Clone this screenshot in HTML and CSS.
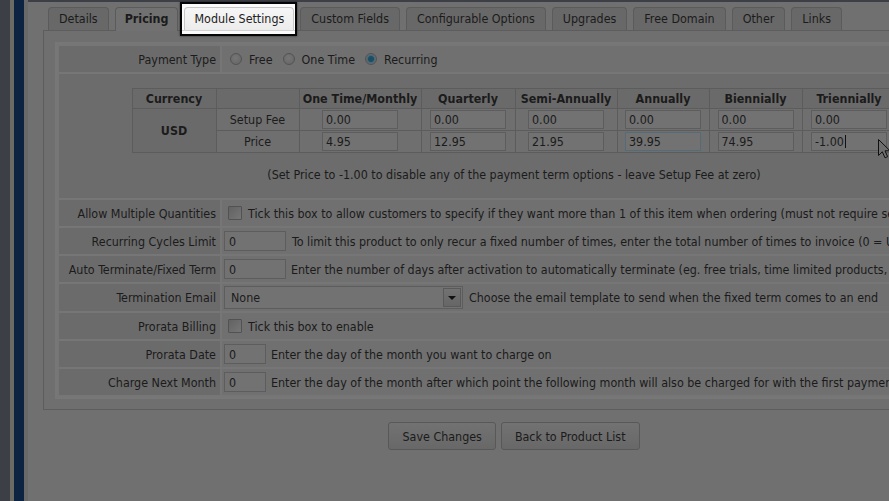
FILE: index.html
```html
<!DOCTYPE html>
<html lang="en">
<head>
<meta charset="utf-8">
<title>Product Pricing</title>
<link rel="stylesheet" href="styles.css">
</head>
<body>
<div class="page">
  <div class="sidebar"></div>
  <div class="main">
    <ul class="tabs">
      <li><a>Details</a></li>
      <li class="active"><a>Pricing</a></li>
      <li class="spot"><a>Module Settings</a></li>
      <li><a>Custom Fields</a></li>
      <li><a>Configurable Options</a></li>
      <li><a>Upgrades</a></li>
      <li><a>Free Domain</a></li>
      <li><a>Other</a></li>
      <li><a>Links</a></li>
    </ul>
    <div class="tabbox">
      <table class="form">
        <colgroup><col class="labelcol"><col></colgroup>
        <tr>
          <td class="label">Payment Type</td>
          <td class="field">
            <div class="opts">
              <label class="opt"><input type="radio" name="pt"><span>Free</span></label>
              <label class="opt"><input type="radio" name="pt"><span>One Time</span></label>
              <label class="opt"><input type="radio" name="pt" checked><span>Recurring</span></label>
            </div>
          </td>
        </tr>
        <tr>
          <td class="pricing" colspan="2">
            <table class="prices">
              <colgroup>
                <col class="c1"><col class="c2"><col class="c3"><col class="c4"><col class="c5"><col class="c6"><col class="c7"><col class="c8">
              </colgroup>
              <tr class="head">
                <th>Currency</th><th></th><th>One Time/Monthly</th><th>Quarterly</th><th>Semi-Annually</th><th>Annually</th><th>Biennially</th><th>Triennially</th>
              </tr>
              <tr>
                <th class="cur" rowspan="2">USD</th>
                <td>Setup Fee</td>
                <td><input class="price" value="0.00"></td>
                <td><input class="price" value="0.00"></td>
                <td><input class="price" value="0.00"></td>
                <td><input class="price" value="0.00"></td>
                <td><input class="price" value="0.00"></td>
                <td><input class="price" value="0.00"></td>
              </tr>
              <tr>
                <td>Price</td>
                <td><input class="price" value="4.95"></td>
                <td><input class="price" value="12.95"></td>
                <td><input class="price" value="21.95"></td>
                <td><input class="price hover" value="39.95"></td>
                <td><input class="price" value="74.95"></td>
                <td><span class="price editing">-1.00<span class="caret"></span></span></td>
              </tr>
            </table>
            <p class="note">(Set Price to -1.00 to disable any of the payment term options - leave Setup Fee at zero)</p>
          </td>
        </tr>
        <tr>
          <td class="label">Allow Multiple Quantities</td>
          <td class="field"><div class="line"><input type="checkbox" class="check"><span class="desc">Tick this box to allow customers to specify if they want more than 1 of this item when ordering (must not require separate config)</span></div></td>
        </tr>
        <tr>
          <td class="label">Recurring Cycles Limit</td>
          <td class="field"><div class="line"><input class="text w62" value="0"><span class="desc">To limit this product to only recur a fixed number of times, enter the total number of times to invoice (0 = Unlimited)</span></div></td>
        </tr>
        <tr>
          <td class="label">Auto Terminate/Fixed Term</td>
          <td class="field"><div class="line"><input class="text w62" value="0"><span class="desc d5">Enter the number of days after activation to automatically terminate (eg. free trials, time limited products, etc...)</span></div></td>
        </tr>
        <tr class="tall">
          <td class="label">Termination Email</td>
          <td class="field"><div class="line"><div class="select"><select><option>None</option></select><span class="arrow"></span></div><span class="desc">Choose the email template to send when the fixed term comes to an end</span></div></td>
        </tr>
        <tr>
          <td class="label">Prorata Billing</td>
          <td class="field"><div class="line"><input type="checkbox" class="check"><span class="desc">Tick this box to enable</span></div></td>
        </tr>
        <tr>
          <td class="label">Prorata Date</td>
          <td class="field"><div class="line"><input class="text w42" value="0"><span class="desc d5">Enter the day of the month you want to charge on</span></div></td>
        </tr>
        <tr>
          <td class="label">Charge Next Month</td>
          <td class="field"><div class="line"><input class="text w42" value="0"><span class="desc d5">Enter the day of the month after which point the following month will also be charged for with the first payment</span></div></td>
        </tr>
      </table>
    </div>
    <div class="buttons">
      <button type="button" class="btn">Save Changes</button>
      <button type="button" class="btn">Back to Product List</button>
    </div>
  </div>
</div>
<svg class="cursor" width="13" height="20" viewBox="0 0 13 20" aria-hidden="true">
  <path d="M0.5 0.5 L0.5 16.5 L4.3 12.8 L7 18.8 L9.6 17.7 L7 11.8 L12 11.8 Z" fill="#6e6e6e" stroke="#101010" stroke-width="1"/>
</svg>
</body>
</html>
```

FILE: styles.css
```css
html, body {
  margin: 0;
  padding: 0;
  overflow: hidden;
  background: #707070;
}
body {
  font-family: "DejaVu Sans Condensed", "Liberation Sans", Arial, sans-serif;
  font-size: 12.4px;
  color: #1b1b1b;
}
.page {
  display: flex;
  width: 1020px;
  min-height: 501px;
}
.sidebar {
  flex: none;
  width: 28px;
  background: linear-gradient(to right, #3c3f45 0 10px, #6b6a63 10px 14px, #0c2442 14px 24px, #696969 24px 28px);
}
.main {
  flex: 1;
  border-top: 2px solid #3c3f45;
  padding-left: 15px;
}

/* tabs */
.tabs {
  list-style: none;
  margin: 0;
  padding: 5px 0 0 5px;
  display: flex;
  align-items: flex-end;
  gap: 6px;
}
.tabs li {
  display: block;
}
.tabs a {
  display: block;
  line-height: 22px;
  padding: 0 10px;
  border: 1px solid #5b5b5b;
  border-bottom: 0;
  border-radius: 4px 4px 0 0;
  background: #686868;
  color: #1b1b1b;
  white-space: nowrap;
}
.tabs li.active {
  position: relative;
  z-index: 1;
  margin-bottom: -1px;
}
.tabs li.active a {
  background: #717171;
  font-weight: bold;
  padding: 0 9px 1px;
}
.tabs li.spot {
  position: relative;
}
.tabs li.spot::before {
  content: "";
  position: absolute;
  top: -5px;
  left: -4px;
  right: -3px;
  bottom: -6px;
  border: 2px solid #050505;
  background: linear-gradient(to bottom, #fbfbfb 0 26px, #d2d2d2 26px 27px, #fbfbfb 27px);
  box-shadow: 0 0 2px rgba(0, 0, 0, 0.6);
}
.tabs li.spot a {
  position: relative;
  padding: 0 9px;
  background: linear-gradient(to bottom, #f6f6f6, #ececec);
  border-color: #c8c8c8;
  color: #222;
}

/* tab box */
.tabbox {
  width: 918px;
  border: 1px solid #5d5d5d;
  background: #6f6f6f;
  padding: 11px 11px 10px;
}
.form {
  width: 100%;
  table-layout: fixed;
  border: 2px solid #777;
  border-spacing: 2px;
  background: #767676;
}
.form .labelcol {
  width: 161px;
}
.form td {
  padding: 0;
  height: 26px;
  vertical-align: middle;
}
.form tr.tall td {
  height: 27px;
}
.form td.label {
  padding-right: 4px;
  text-align: right;
  background: #6b6b6b;
  white-space: nowrap;
}
.form td.field {
  background: #707070;
  padding-left: 2px;
  white-space: nowrap;
}
.form td.pricing {
  background: #6c6c6c;
  vertical-align: top;
  padding: 14px 0 16px;
  height: auto;
}

/* payment type */
.opts {
  display: flex;
  align-items: center;
}
.opt {
  display: flex;
  align-items: center;
  margin-left: 6px;
  margin-right: 4px;
}
.opt span {
  margin-left: 7px;
}
input[type="radio"] {
  appearance: none;
  -webkit-appearance: none;
  flex: none;
  margin: 0;
  width: 12px;
  height: 12px;
  border: 1px solid #535353;
  border-radius: 50%;
  background: radial-gradient(circle at 45% 40%, #767676, #646464);
}
input[type="radio"]:checked {
  background: radial-gradient(circle, #1d4d64 0 2.5px, #3b6b7f 3.5px, #686868 4.5px);
}

/* pricing table */
.prices {
  border-collapse: collapse;
  table-layout: fixed;
  width: 764px;
  margin: 0 auto;
}
.prices .c1 { width: 84px; }
.prices .c2 { width: 83px; }
.prices .c3 { width: 122px; }
.prices .c4 { width: 94px; }
.prices .c5 { width: 102px; }
.prices .c6 { width: 92px; }
.prices .c7 { width: 93px; }
.prices .c8 { width: 94px; }
.prices th, .prices td {
  border: 1px solid #5c5c5c;
  padding: 0;
  text-align: center;
  height: 21px;
  background: #6f6f6f;
}
.prices tr.head th {
  height: 19px;
  background: #6a6a6a;
  font-weight: bold;
}
.prices th.cur {
  background: #6a6a6a;
  font-weight: bold;
}
.price {
  box-sizing: border-box;
  display: inline-block;
  width: 76px;
  height: 19px;
  margin: 0;
  padding: 0 3px;
  border: 1px solid #5d5d5d;
  background: #727272;
  font: inherit;
  color: #1b1b1b;
  text-align: left;
  vertical-align: middle;
  line-height: 17px;
}
.price.hover {
  border-color: #566b78;
}
.price.editing {
  white-space: nowrap;
}
.caret {
  display: inline-block;
  width: 1px;
  height: 13px;
  margin-left: 1px;
  background: #111;
  vertical-align: -2px;
}
.note {
  margin: 15px 0 0;
  line-height: 14px;
  text-align: center;
}

/* lines */
.line {
  display: flex;
  align-items: center;
}
.desc {
  flex: none;
  margin-left: 6px;
}
.desc.d5 {
  margin-left: 5px;
}
.check {
  appearance: none;
  -webkit-appearance: none;
  flex: none;
  margin: 0 0 0 4px;
  width: 14px;
  height: 14px;
  border: 1px solid #525252;
  border-radius: 1px;
  background: linear-gradient(135deg, #626262, #767676);
}
.text {
  box-sizing: border-box;
  flex: none;
  height: 20px;
  margin: 0;
  padding: 0 4px;
  border: 1px solid #5d5d5d;
  background: #727272;
  font: inherit;
  color: #1b1b1b;
}
.w62 { width: 62px; }
.w42 { width: 42px; }
.select {
  box-sizing: border-box;
  flex: none;
  display: flex;
  align-items: center;
  width: 239px;
  height: 23px;
  border: 1px solid #5d5d5d;
  background: #727272;
  padding: 1px;
}
.select select {
  appearance: none;
  -webkit-appearance: none;
  flex: 1;
  min-width: 0;
  height: 100%;
  border: 0;
  margin: 0;
  padding: 0 0 0 5px;
  background: transparent;
  font: inherit;
  color: #1b1b1b;
}
.arrow {
  box-sizing: border-box;
  flex: none;
  width: 18px;
  height: 19px;
  border: 1px solid #595959;
  background: linear-gradient(#727272, #666);
  display: flex;
  align-items: center;
  justify-content: center;
}
.arrow::after {
  content: "";
  width: 0;
  height: 0;
  border-left: 4px solid transparent;
  border-right: 4px solid transparent;
  border-top: 4px solid #111;
}

/* buttons */
.buttons {
  width: 942px;
  display: flex;
  justify-content: center;
  gap: 5px;
  margin-top: 12px;
}
.btn {
  height: 28px;
  padding: 0 13px;
  border: 1px solid #585858;
  border-radius: 3px;
  background: linear-gradient(#727272, #686868);
  font: inherit;
  color: #1b1b1b;
}

.cursor {
  position: absolute;
  left: 878px;
  top: 139px;
}
```
